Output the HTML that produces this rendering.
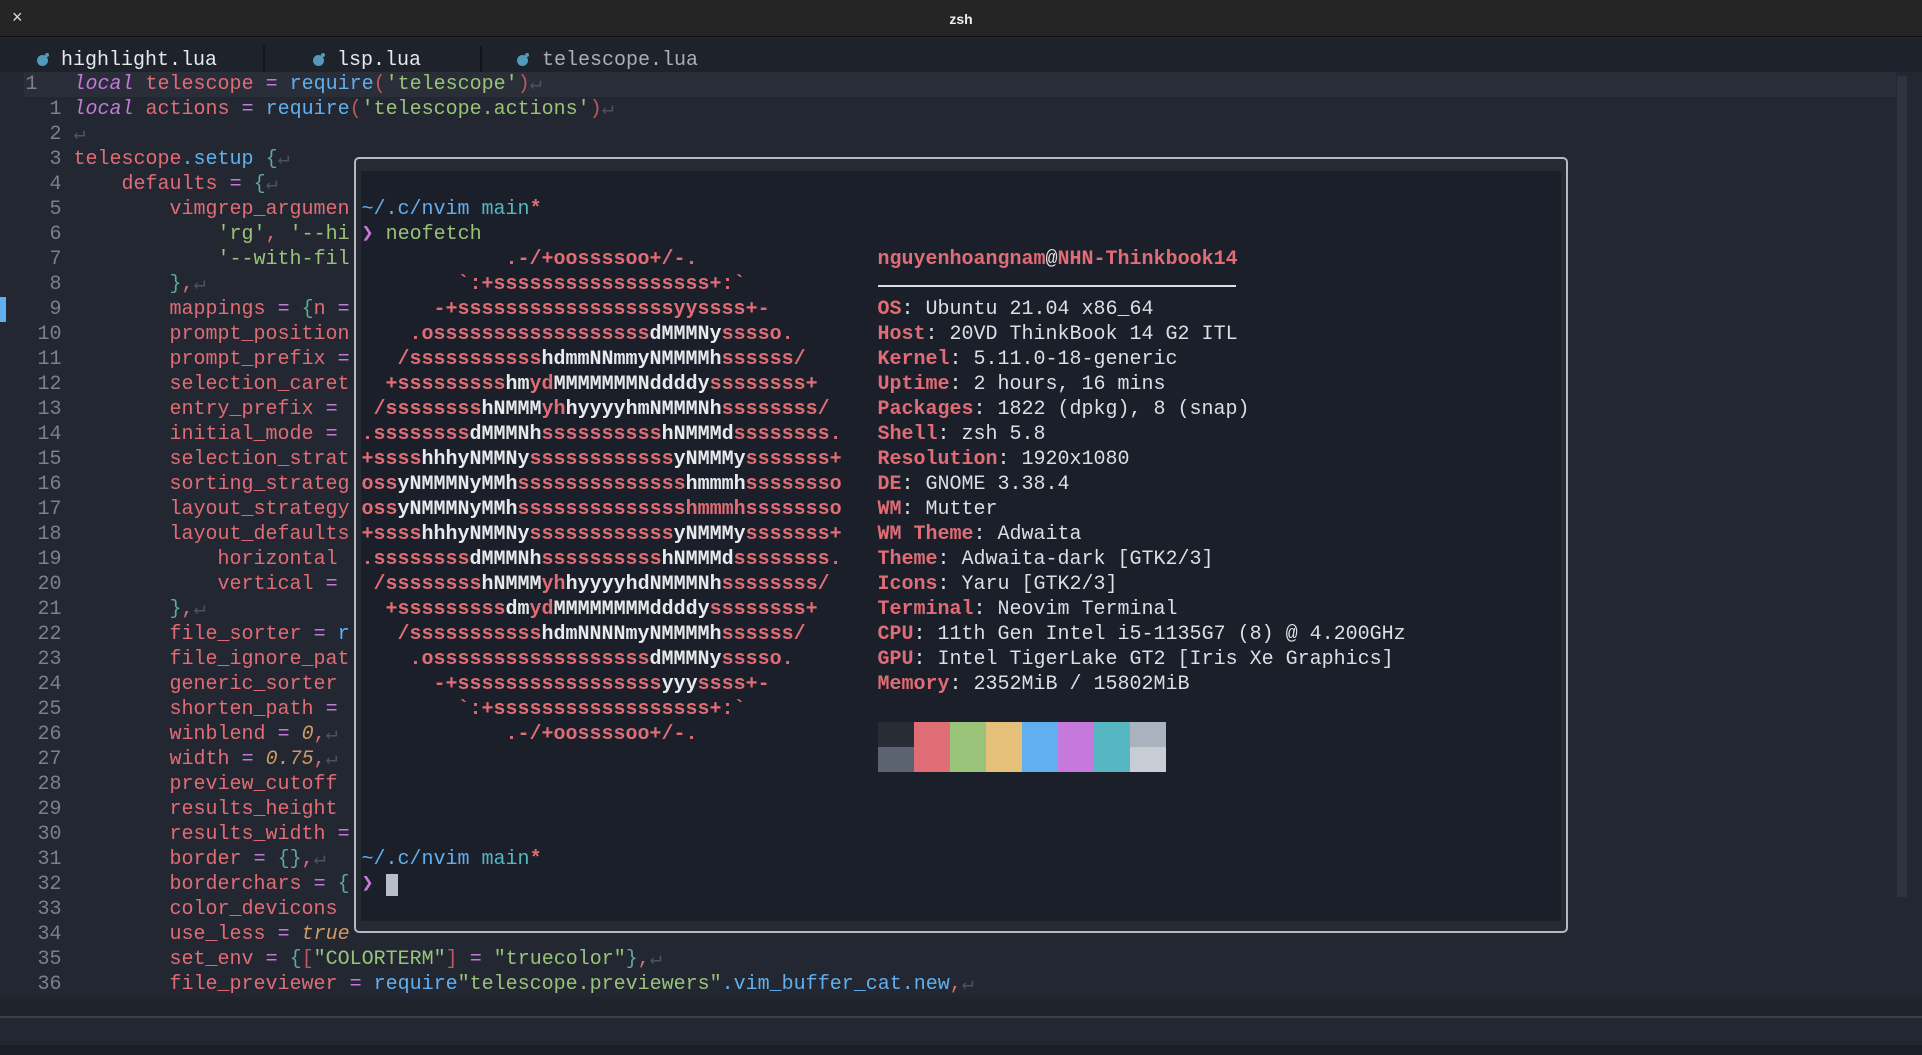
<!DOCTYPE html>
<html><head><meta charset="utf-8"><style>
*{margin:0;padding:0;box-sizing:border-box}
body{width:1922px;height:1055px;overflow:hidden;background:#222731;font-family:"Liberation Mono","DejaVu Sans Mono",monospace;position:relative}
.abs{position:absolute}
pre{font-family:"Liberation Mono","DejaVu Sans Mono",monospace;font-size:20px;line-height:25px;white-space:pre;color:#abb2bf}
.k{color:#c678dd;font-style:italic}
.v{color:#e06c75}
.o{color:#c678dd}
.f{color:#61afef}
.s{color:#98c379}
.n{color:#d19a66;font-style:italic}
.b{color:#5fa89a}
.pr{color:#c0565e}
.e{color:#4b5263}
.ln{color:#7a808c}
.r{color:#e06c75;font-weight:bold}
.w{color:#e8eaee;font-weight:bold}
.t{color:#dcdfe4}
</style></head><body>
<div class="abs" style="left:0;top:0;width:1922px;height:37px;background:#252525;border-bottom:1px solid #111"></div>
<div class="abs" style="left:12px;top:7px;color:#ddd;font:18px 'Liberation Sans',sans-serif">×</div>
<div class="abs" style="left:0;width:1922px;top:11px;text-align:center;color:#eee;font:bold 14px 'Liberation Sans',sans-serif">zsh</div>
<div class="abs" style="left:0;top:38px;width:1922px;height:34px;background:#1d222b"></div>
<div class="abs" style="left:263px;top:46px;width:2px;height:26px;background:#11141a"></div>
<div class="abs" style="left:480px;top:46px;width:2px;height:26px;background:#11141a"></div>
<div class="abs" style="left:37px;top:55px;width:11px;height:11px;border-radius:50%;background:#519aba"></div>
<div class="abs" style="left:45px;top:53px;width:4px;height:4px;border-radius:50%;background:#519aba"></div>
<div class="abs" style="left:313px;top:55px;width:11px;height:11px;border-radius:50%;background:#519aba"></div>
<div class="abs" style="left:321px;top:53px;width:4px;height:4px;border-radius:50%;background:#519aba"></div>
<div class="abs" style="left:517px;top:55px;width:11px;height:11px;border-radius:50%;background:#519aba"></div>
<div class="abs" style="left:525px;top:53px;width:4px;height:4px;border-radius:50%;background:#519aba"></div>
<pre class="abs" style="left:61px;top:48px;color:#e6e8ec">highlight.lua</pre>
<pre class="abs" style="left:337px;top:48px;color:#e6e8ec">lsp.lua</pre>
<pre class="abs" style="left:542px;top:48px;color:#a8afbb">telescope.lua</pre>
<div class="abs" style="left:24px;top:72px;width:1872px;height:25px;background:#292e39"></div>
<div class="abs" style="left:0;top:297px;width:6px;height:25px;background:#61afef"></div>
<div class="abs" style="left:1897px;top:76px;width:10px;height:821px;background:#2d3340"></div>
<pre class="abs" style="left:1.5px;top:72px">
<span class="ln">  1   </span><span class="k">local</span> <span class="v">telescope</span> <span class="o">=</span> <span class="f">require</span><span class="pr">(</span><span class="s">'telescope'</span><span class="pr">)</span><span class="e">↵</span>
<span class="ln">    1 </span><span class="k">local</span> <span class="v">actions</span> <span class="o">=</span> <span class="f">require</span><span class="pr">(</span><span class="s">'telescope.actions'</span><span class="pr">)</span><span class="e">↵</span>
<span class="ln">    2 </span><span class="e">↵</span>
<span class="ln">    3 </span><span class="v">telescope</span><span class="f">.setup</span> <span class="b">{</span><span class="e">↵</span>
<span class="ln">    4 </span>    <span class="v">defaults</span> <span class="o">=</span> <span class="b">{</span><span class="e">↵</span>
<span class="ln">    5 </span>        <span class="v">vimgrep_argumen</span>
<span class="ln">    6 </span>            <span class="s">'rg'</span><span class="v">,</span> <span class="s">'--hi</span>
<span class="ln">    7 </span>            <span class="s">'--with-fil</span>
<span class="ln">    8 </span>        <span class="b">}</span><span class="v">,</span><span class="e">↵</span>
<span class="ln">    9 </span>        <span class="v">mappings</span> <span class="o">=</span> <span class="b">{</span><span class="v">n</span> <span class="o">=</span>
<span class="ln">   10 </span>        <span class="v">prompt_position</span>
<span class="ln">   11 </span>        <span class="v">prompt_prefix</span> <span class="o">=</span>
<span class="ln">   12 </span>        <span class="v">selection_caret</span>
<span class="ln">   13 </span>        <span class="v">entry_prefix</span> <span class="o">=</span>
<span class="ln">   14 </span>        <span class="v">initial_mode</span> <span class="o">=</span>
<span class="ln">   15 </span>        <span class="v">selection_strat</span>
<span class="ln">   16 </span>        <span class="v">sorting_strateg</span>
<span class="ln">   17 </span>        <span class="v">layout_strategy</span>
<span class="ln">   18 </span>        <span class="v">layout_defaults</span>
<span class="ln">   19 </span>            <span class="v">horizontal</span>
<span class="ln">   20 </span>            <span class="v">vertical</span> <span class="o">=</span>
<span class="ln">   21 </span>        <span class="b">}</span><span class="v">,</span><span class="e">↵</span>
<span class="ln">   22 </span>        <span class="v">file_sorter</span> <span class="o">=</span> <span class="f">r</span>
<span class="ln">   23 </span>        <span class="v">file_ignore_pat</span>
<span class="ln">   24 </span>        <span class="v">generic_sorter</span>
<span class="ln">   25 </span>        <span class="v">shorten_path</span> <span class="o">=</span>
<span class="ln">   26 </span>        <span class="v">winblend</span> <span class="o">=</span> <span class="n">0</span><span class="v">,</span><span class="e">↵</span>
<span class="ln">   27 </span>        <span class="v">width</span> <span class="o">=</span> <span class="n">0.75</span><span class="v">,</span><span class="e">↵</span>
<span class="ln">   28 </span>        <span class="v">preview_cutoff</span>
<span class="ln">   29 </span>        <span class="v">results_height</span>
<span class="ln">   30 </span>        <span class="v">results_width</span> <span class="o">=</span>
<span class="ln">   31 </span>        <span class="v">border</span> <span class="o">=</span> <span class="b">{}</span><span class="v">,</span><span class="e">↵</span>
<span class="ln">   32 </span>        <span class="v">borderchars</span> <span class="o">=</span> <span class="b">{</span>
<span class="ln">   33 </span>        <span class="v">color_devicons</span>
<span class="ln">   34 </span>        <span class="v">use_less</span> <span class="o">=</span> <span class="n">true</span>
<span class="ln">   35 </span>        <span class="v">set_env</span> <span class="o">=</span> <span class="b">{</span><span class="pr">[</span><span class="s">"COLORTERM"</span><span class="pr">]</span> <span class="o">=</span> <span class="s">"truecolor"</span><span class="b">}</span><span class="v">,</span><span class="e">↵</span>
<span class="ln">   36 </span>        <span class="v">file_previewer</span> <span class="o">=</span> <span class="f">require</span><span class="s">"telescope.previewers"</span><span class="f">.vim_buffer_cat.new</span><span class="v">,</span><span class="e">↵</span>
</pre>
<div class="abs" style="left:0;top:997px;width:1922px;height:19px;background:#1e232c"></div>
<div class="abs" style="left:0;top:1016px;width:1922px;height:2px;background:#3a3f4a"></div>
<div class="abs" style="left:0;top:1018px;width:1922px;height:27px;background:#222731"></div>
<div class="abs" style="left:0;top:1045px;width:1922px;height:10px;background:#1a1e26"></div>
<div class="abs" style="left:354px;top:157px;width:1214px;height:776px;background:#252a33;border:2px solid #b4b8c0;border-radius:5px"></div>
<div class="abs" style="left:361px;top:171px;width:1200px;height:750px;background:#1b1f29"></div>
<pre class="abs" style="left:361.5px;top:197px"><span class="f">~/.c/nvim</span> <span style="color:#56b6c2">main</span><span class="r">*</span>
<span class="o">❯</span> <span class="s">neofetch</span></pre>
<pre class="abs" style="left:361.5px;top:847px"><span class="f">~/.c/nvim</span> <span style="color:#56b6c2">main</span><span class="r">*</span>
<span class="o">❯</span> </pre>
<div class="abs" style="left:385.5px;top:874px;width:12px;height:22px;background:#b8bec9"></div>
<pre class="abs" style="left:361.5px;top:247px;font-weight:bold;color:#e06c75"><span>            .-/+oossssoo+/-.</span>
<span>        `:+ssssssssssssssssss+:`</span>
<span>      -+ssssssssssssssssssyyssss+-</span>
<span>    .ossssssssssssssssss<b class="w">dMMMNy</b>sssso.</span>
<span>   /sssssssssss<b class="w">hdmmNNmmyNMMMMh</b>ssssss/</span>
<span>  +sssssssss<b class="w">hm</b>yd<b class="w">MMMMMMMNddddy</b>ssssssss+</span>
<span> /ssssssss<b class="w">hNMMM</b>yh<b class="w">hyyyyhmNMMMNh</b>ssssssss/</span>
<span>.ssssssss<b class="w">dMMMNh</b>ssssssssss<b class="w">hNMMMd</b>ssssssss.</span>
<span>+ssss<b class="w">hhhyNMMNy</b>ssssssssssss<b class="w">yNMMMy</b>sssssss+</span>
<span>oss<b class="w">yNMMMNyMMh</b>ssssssssssssss<b class="w">hmmmh</b>ssssssso</span>
<span>oss<b class="w">yNMMMNyMMh</b>sssssssssssssshmmmhssssssso</span>
<span>+ssss<b class="w">hhhyNMMNy</b>ssssssssssss<b class="w">yNMMMy</b>sssssss+</span>
<span>.ssssssss<b class="w">dMMMNh</b>ssssssssss<b class="w">hNMMMd</b>ssssssss.</span>
<span> /ssssssss<b class="w">hNMMM</b>yh<b class="w">hyyyyhdNMMMNh</b>ssssssss/</span>
<span>  +sssssssss<b class="w">dm</b>yd<b class="w">MMMMMMMMddddy</b>ssssssss+</span>
<span>   /sssssssssss<b class="w">hdmNNNNmyNMMMMh</b>ssssss/</span>
<span>    .ossssssssssssssssss<b class="w">dMMMNy</b>sssso.</span>
<span>      -+sssssssssssssssss<b class="w">yyy</b>ssss+-</span>
<span>        `:+ssssssssssssssssss+:`</span>
<span>            .-/+oossssoo+/-.</span></pre>
<pre class="abs t" style="left:877.5px;top:247px"><span class="r">nguyenhoangnam</span>@<span class="r">NHN-Thinkbook14</span>

<span class="r">OS</span>: Ubuntu 21.04 x86_64
<span class="r">Host</span>: 20VD ThinkBook 14 G2 ITL
<span class="r">Kernel</span>: 5.11.0-18-generic
<span class="r">Uptime</span>: 2 hours, 16 mins
<span class="r">Packages</span>: 1822 (dpkg), 8 (snap)
<span class="r">Shell</span>: zsh 5.8
<span class="r">Resolution</span>: 1920x1080
<span class="r">DE</span>: GNOME 3.38.4
<span class="r">WM</span>: Mutter
<span class="r">WM Theme</span>: Adwaita
<span class="r">Theme</span>: Adwaita-dark [GTK2/3]
<span class="r">Icons</span>: Yaru [GTK2/3]
<span class="r">Terminal</span>: Neovim Terminal
<span class="r">CPU</span>: 11th Gen Intel i5-1135G7 (8) @ 4.200GHz
<span class="r">GPU</span>: Intel TigerLake GT2 [Iris Xe Graphics]
<span class="r">Memory</span>: 2352MiB / 15802MiB</pre>
<div class="abs" style="left:877.5px;top:285px;width:358px;height:2px;background:#dcdfe4"></div>
<div class="abs" style="left:877.5px;top:722px;display:flex">
<div style="width:36px;height:25px;background:#282c34"></div><div style="width:36px;height:25px;background:#e06c75"></div><div style="width:36px;height:25px;background:#98c379"></div><div style="width:36px;height:25px;background:#e5c07b"></div><div style="width:36px;height:25px;background:#61afef"></div><div style="width:36px;height:25px;background:#c678dd"></div><div style="width:36px;height:25px;background:#56b6c2"></div><div style="width:36px;height:25px;background:#abb2bf"></div>
</div>
<div class="abs" style="left:877.5px;top:747px;display:flex">
<div style="width:36px;height:25px;background:#5c6370"></div><div style="width:36px;height:25px;background:#e06c75"></div><div style="width:36px;height:25px;background:#98c379"></div><div style="width:36px;height:25px;background:#e5c07b"></div><div style="width:36px;height:25px;background:#61afef"></div><div style="width:36px;height:25px;background:#c678dd"></div><div style="width:36px;height:25px;background:#56b6c2"></div><div style="width:36px;height:25px;background:#c8ccd4"></div>
</div>
</body></html>
